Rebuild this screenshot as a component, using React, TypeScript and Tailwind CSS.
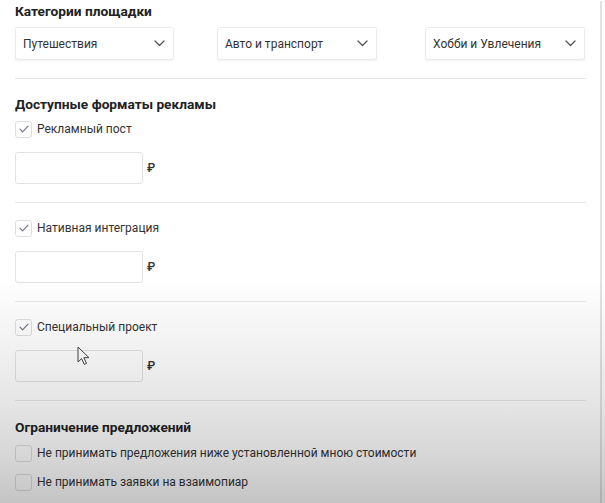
import type { FC } from "react";

const Chevron: FC = () => (
  <svg width="11" height="7" viewBox="0 0 11 7" fill="none" className="shrink-0">
    <path d="M1 1l4.5 4.5L10 1" stroke="#555" strokeWidth="1.3" strokeLinecap="round" strokeLinejoin="round" />
  </svg>
);

const Select: FC<{ label: string; className?: string }> = ({ label, className }) => (
  <div
    className={`h-[33px] flex items-center justify-between pl-[7px] pr-[8px] bg-white border border-[#ebebeb] rounded-[3px] shadow-[0_1px_2px_rgba(0,0,0,0.06)] text-[12px] text-[#333] ${className ?? ""}`}
  >
    <span>{label}</span>
    <Chevron />
  </div>
);

const Checkbox: FC<{ checked?: boolean; label: string; className?: string }> = ({ checked, label, className }) => (
  <div className={`flex items-center h-[16px] ${className ?? ""}`}>
    <div className="w-[17px] h-[17px] shrink-0 flex items-center justify-center bg-white border border-[#dedede] rounded-[3px]">
      {checked && (
        <svg width="10" height="8" viewBox="0 0 10 8" fill="none">
          <path d="M1 4.2l2.6 2.6L9 1.2" stroke="#77778a" strokeWidth="1.2" strokeLinecap="round" strokeLinejoin="round" />
        </svg>
      )}
    </div>
    <span className="ml-[5px] text-[12px] text-[#333]">{label}</span>
  </div>
);

const PriceInput: FC = () => (
  <div className="flex items-center mt-[15px]">
    <div className="w-[128px] h-[32px] bg-white border border-[#e3e3e3] rounded-[3px]" />
    <span className="ml-[4px] text-[12px] font-medium text-[#333]">₽</span>
  </div>
);

const Divider: FC<{ className?: string }> = ({ className }) => (
  <div className={`h-px bg-[#e6e6e6] ${className ?? ""}`} />
);

const formats = ["Рекламный пост", "Нативная интеграция", "Специальный проект"];

export default function App() {
  return (
    <div className="relative w-[605px] h-[503px] overflow-hidden bg-white font-['Roboto',sans-serif]">
      <div className="w-[602px] h-full border-r-2 border-[#e2e2e2] pl-[15px] pr-[14px]">
        <h2 className="mt-[1px] h-[20px] leading-[20px] text-[13.7px] font-bold text-[#222]">Категории площадки</h2>
        <div className="flex mt-[6px]">
          <Select label="Путешествия" className="w-[159px]" />
          <Select label="Авто и транспорт" className="w-[160px] ml-[43px]" />
          <Select label="Хобби и Увлечения" className="w-[160px] ml-[48px]" />
        </div>
        <Divider className="mt-[18px]" />

        <h2 className="mt-[15px] h-[20px] leading-[20px] text-[13.7px] font-bold text-[#222]">Доступные форматы рекламы</h2>
        {formats.map((f, i) => (
          <div key={f}>
            <Checkbox checked label={f} className={i === 0 ? "mt-[7px]" : "mt-[17px]"} />
            <PriceInput />
            <Divider className="mt-[18px]" />
          </div>
        ))}

        <h2 className="mt-[16px] h-[20px] leading-[20px] text-[13.7px] font-bold text-[#222]">Ограничение предложений</h2>
        <Checkbox label="Не принимать предложения ниже установленной мною стоимости" className="mt-[8px]" />
        <Checkbox label="Не принимать заявки на взаимопиар" className="mt-[13px]" />
      </div>

      {/* mouse pointer */}
      <svg className="absolute left-[77px] top-[346px]" width="14" height="20" viewBox="0 0 14 20" fill="none">
        <path d="M1 1v15l3.6-3.4 2.6 5.8 2.3-1-2.6-5.7H12L1 1z" fill="#fff" stroke="#444" strokeWidth="1" strokeLinejoin="round" />
      </svg>

      {/* video shading */}
      <div className="pointer-events-none absolute inset-0 bg-[linear-gradient(to_bottom,rgba(0,0,0,0)_0%,rgba(0,0,0,0)_55%,rgba(0,0,0,0.05)_68%,rgba(0,0,0,0.1)_80%,rgba(0,0,0,0.17)_92%,rgba(0,0,0,0.23)_100%)]" />
    </div>
  );
}
